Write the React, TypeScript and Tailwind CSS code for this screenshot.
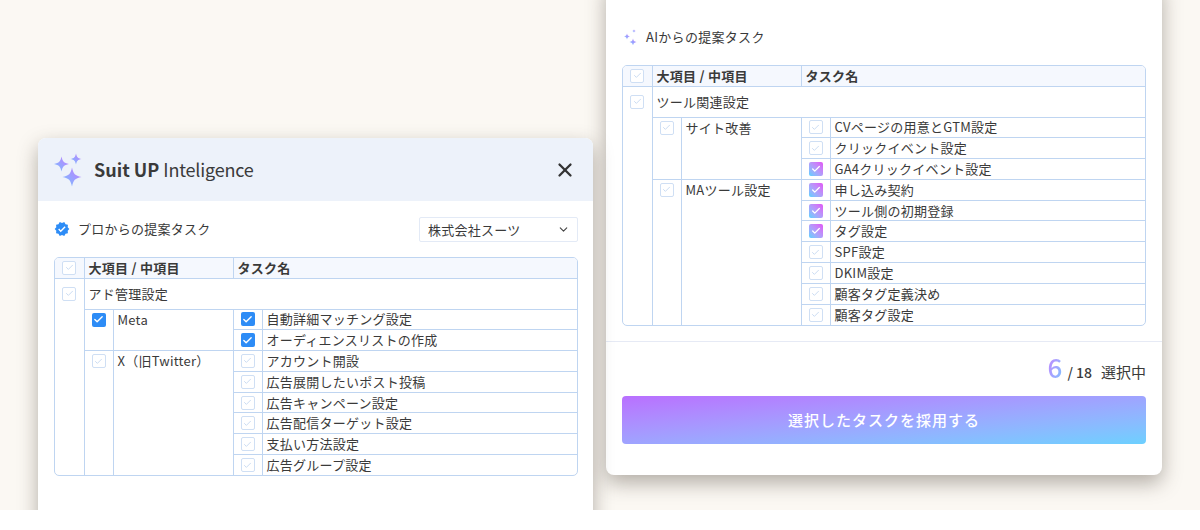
import { useId } from 'react'
import { Check, ChevronDown, X } from 'lucide-react'
import { MdVerified } from 'react-icons/md'

type Tone = 'off' | 'blue' | 'ai'
type Task = { name: string; tone?: Tone }
type Group = { name: string; tone?: Tone; tasks: Task[] }

const font = 'font-["Noto_Sans_CJK_JP","Noto_Sans",sans-serif]'
const line = 'border-[#bfd5f1]'

const starPath = (x: number, y: number, r: number) => {
  const a = r * 0.16
  const b = r * 0.3
  return `M${x} ${y - r}C${x + a} ${y - b} ${x + b} ${y - a} ${x + r} ${y}C${x + b} ${y + a} ${x + a} ${y + b} ${x} ${y + r}C${x - a} ${y + b} ${x - b} ${y + a} ${x - r} ${y}C${x - b} ${y - a} ${x - a} ${y - b} ${x} ${y - r}Z`
}

function Sparkles({ size, height, stars }: { size: number; height: number; stars: number[][] }) {
  const id = useId()
  return (
    <svg width={size} height={height} viewBox={`0 0 ${size} ${height}`} className="shrink-0">
      <defs>
        <linearGradient id={id} x1="1" y1="0" x2="0" y2="1">
          <stop offset="0" stopColor="#c57bff" />
          <stop offset="1" stopColor="#74c2ff" />
        </linearGradient>
      </defs>
      {stars.map(([x, y, r]) => (
        <path key={`${x}-${y}`} d={starPath(x, y, r)} fill={`url(#${id})`} />
      ))}
    </svg>
  )
}

function Box({ tone = 'off' }: { tone?: Tone }) {
  if (tone === 'blue') {
    return (
      <span className="flex h-[14px] w-[14px] items-center justify-center rounded-[2px] bg-[#2d8cf6]">
        <Check size={11} strokeWidth={3} className="text-white" />
      </span>
    )
  }
  if (tone === 'ai') {
    return (
      <span className="flex h-[14px] w-[14px] items-center justify-center rounded-[2px] bg-gradient-to-bl from-[#e04ff5] to-[#4fd0ff]">
        <Check size={10} strokeWidth={3} className="text-white" />
      </span>
    )
  }
  return (
    <span className="flex h-[14px] w-[14px] items-center justify-center rounded-[2px] border-[1.5px] border-[#cfdff4] bg-white">
      <Check size={9} strokeWidth={2} className="text-[#b9d0ee]" />
    </span>
  )
}

function TaskTable({ title, tone, groups }: { title: string; tone?: Tone; groups: Group[] }) {
  const total = groups.reduce((sum, g) => sum + g.tasks.length, 0)
  return (
    <div className={`overflow-hidden rounded-[5px] border ${line}`}>
      <table className="w-full table-fixed border-collapse text-[13px] leading-[18px] tracking-[0.25px] text-[#3a3a3a]">
        <colgroup>
          <col className="w-[29px]" />
          <col className="w-[29px]" />
          <col className="w-[120px]" />
          <col className="w-[29px]" />
          <col />
        </colgroup>
        <thead>
          <tr className="h-[20px] bg-[#f5f8fe]">
            <td className="p-0">
              <div className="flex justify-center">
                <Box />
              </div>
            </td>
            <th colSpan={2} className={`border-l ${line} px-[4px] py-0 text-left font-bold`}>
              大項目 / 中項目
            </th>
            <th colSpan={2} className={`border-l ${line} px-[4px] py-0 text-left font-bold`}>
              タスク名
            </th>
          </tr>
        </thead>
        <tbody>
          <tr className={`h-[31px] border-t ${line}`}>
            <td rowSpan={total + 1} className="p-0 align-top">
              <div className="flex justify-center pt-[8px]">
                <Box tone={tone} />
              </div>
            </td>
            <td colSpan={4} className={`border-l ${line} px-[4px] py-0`}>
              {title}
            </td>
          </tr>
          {groups.map((group) =>
            group.tasks.map((task, i) => (
              <tr key={task.name} className={`h-[20.8px] border-t ${line}`}>
                {i === 0 && (
                  <>
                    <td rowSpan={group.tasks.length} className={`border-l ${line} p-0 align-top`}>
                      <div className="flex justify-center pt-[3px]">
                        <Box tone={group.tone} />
                      </div>
                    </td>
                    <td
                      rowSpan={group.tasks.length}
                      className={`border-l ${line} px-[4px] pt-[1px] pb-0 align-top`}
                    >
                      {group.name}
                    </td>
                  </>
                )}
                <td className={`border-l ${line} p-0`}>
                  <div className="flex justify-center">
                    <Box tone={task.tone} />
                  </div>
                </td>
                <td className={`border-l ${line} py-0 pl-[4px] pr-0`}>{task.name}</td>
              </tr>
            ))
          )}
        </tbody>
      </table>
    </div>
  )
}

const proGroups: Group[] = [
  {
    name: 'Meta',
    tone: 'blue',
    tasks: [
      { name: '自動詳細マッチング設定', tone: 'blue' },
      { name: 'オーディエンスリストの作成', tone: 'blue' },
    ],
  },
  {
    name: 'X（旧Twitter）',
    tasks: [
      { name: 'アカウント開設' },
      { name: '広告展開したいポスト投稿' },
      { name: '広告キャンペーン設定' },
      { name: '広告配信ターゲット設定' },
      { name: '支払い方法設定' },
      { name: '広告グループ設定' },
    ],
  },
]

const aiGroups: Group[] = [
  {
    name: 'サイト改善',
    tasks: [
      { name: 'CVページの用意とGTM設定' },
      { name: 'クリックイベント設定' },
      { name: 'GA4クリックイベント設定', tone: 'ai' },
    ],
  },
  {
    name: 'MAツール設定',
    tasks: [
      { name: '申し込み契約', tone: 'ai' },
      { name: 'ツール側の初期登録', tone: 'ai' },
      { name: 'タグ設定', tone: 'ai' },
      { name: 'SPF設定' },
      { name: 'DKIM設定' },
      { name: '顧客タグ定義決め' },
      { name: '顧客タグ設定' },
    ],
  },
]

export default function App() {
  return (
    <div className={`${font} h-[530px] bg-white`}>
      <div className="relative h-[510px] overflow-hidden bg-[#fbf8f3]">
        {/* right window, top cut off by the page */}
        <div className="absolute left-[606px] top-[-20px] h-[495px] w-[556px] rounded-[8px] bg-white shadow-[0_8px_20px_rgba(70,60,50,0.4)]">
          <div className="flex items-center gap-[7px] pl-[18px] pt-[47px] text-[13px] leading-[20px] tracking-[0.3px] text-[#3a3a3a]">
            <Sparkles
              size={15}
              height={16}
              stars={[
                [9, 13, 3.5],
                [3, 7.5, 3],
                [10, 2, 1.8],
              ]}
            />
            AIからの提案タスク
          </div>
          <div className="px-[16px] pt-[18px]">
            <TaskTable title="ツール関連設定" groups={aiGroups} />
          </div>
          <div className="mt-[15px] border-t border-[#e6eaf5] px-[16px]">
            <div className="flex items-baseline justify-end pt-[6px] text-[#3a3a3a]">
              <span className="bg-gradient-to-br from-[#c57bff] to-[#6fc6ff] bg-clip-text text-[26px] font-medium leading-[38px] text-transparent">
                6
              </span>
              <span className="ml-[5px] text-[14px] font-medium">/ 18</span>
              <span className="ml-[9px] text-[15px]">選択中</span>
            </div>
            <button
              type="button"
              className="mt-[10px] flex h-[48px] w-full items-center justify-center rounded-[4px] bg-gradient-to-br from-[#b96fff] to-[#6cd0ff] text-[15px] font-medium tracking-[1px] text-white"
            >
              選択したタスクを採用する
            </button>
          </div>
        </div>

        {/* left window, runs off the bottom */}
        <div className="absolute left-[38px] top-[138px] h-[440px] w-[555px] rounded-[8px] bg-white shadow-[0_8px_20px_rgba(70,60,50,0.4)]">
          <div className="flex h-[63px] items-center justify-between rounded-t-[8px] bg-[#edf2fa] pl-[16px] pr-[17px]">
            <div className="flex items-center gap-[7px] text-[18px] text-[#3a3a3a]">
              <Sparkles
                size={33}
                height={34}
                stars={[
                  [7.5, 11, 7.5],
                  [22, 6, 5.5],
                  [18, 24, 9.5],
                ]}
              />
              <span>
                <span className="font-bold">Suit UP</span>{' '}
                <span className="tracking-[-0.2px]">Inteligence</span>
              </span>
            </div>
            <X size={22} strokeWidth={2.5} className="text-[#333333]" />
          </div>
          <div className="flex items-center justify-between pl-[16px] pr-[15px] pt-[16px]">
            <div className="mb-[2px] flex items-center gap-[8px] text-[13px] tracking-[0.25px] text-[#3a3a3a]">
              <MdVerified size={16} className="text-[#2d8cf6]" />
              プロからの提案タスク
            </div>
            <div className="flex h-[25px] w-[159px] items-center justify-between rounded-[2px] border border-[#e3eaf6] pl-[8px] pr-[7px] text-[13px] tracking-[0.25px] text-[#3a3a3a]">
              株式会社スーツ
              <ChevronDown size={13} className="text-[#444444]" />
            </div>
          </div>
          <div className="pl-[16px] pr-[15px] pt-[15px]">
            <TaskTable title="アド管理設定" groups={proGroups} />
          </div>
        </div>
      </div>
    </div>
  )
}
